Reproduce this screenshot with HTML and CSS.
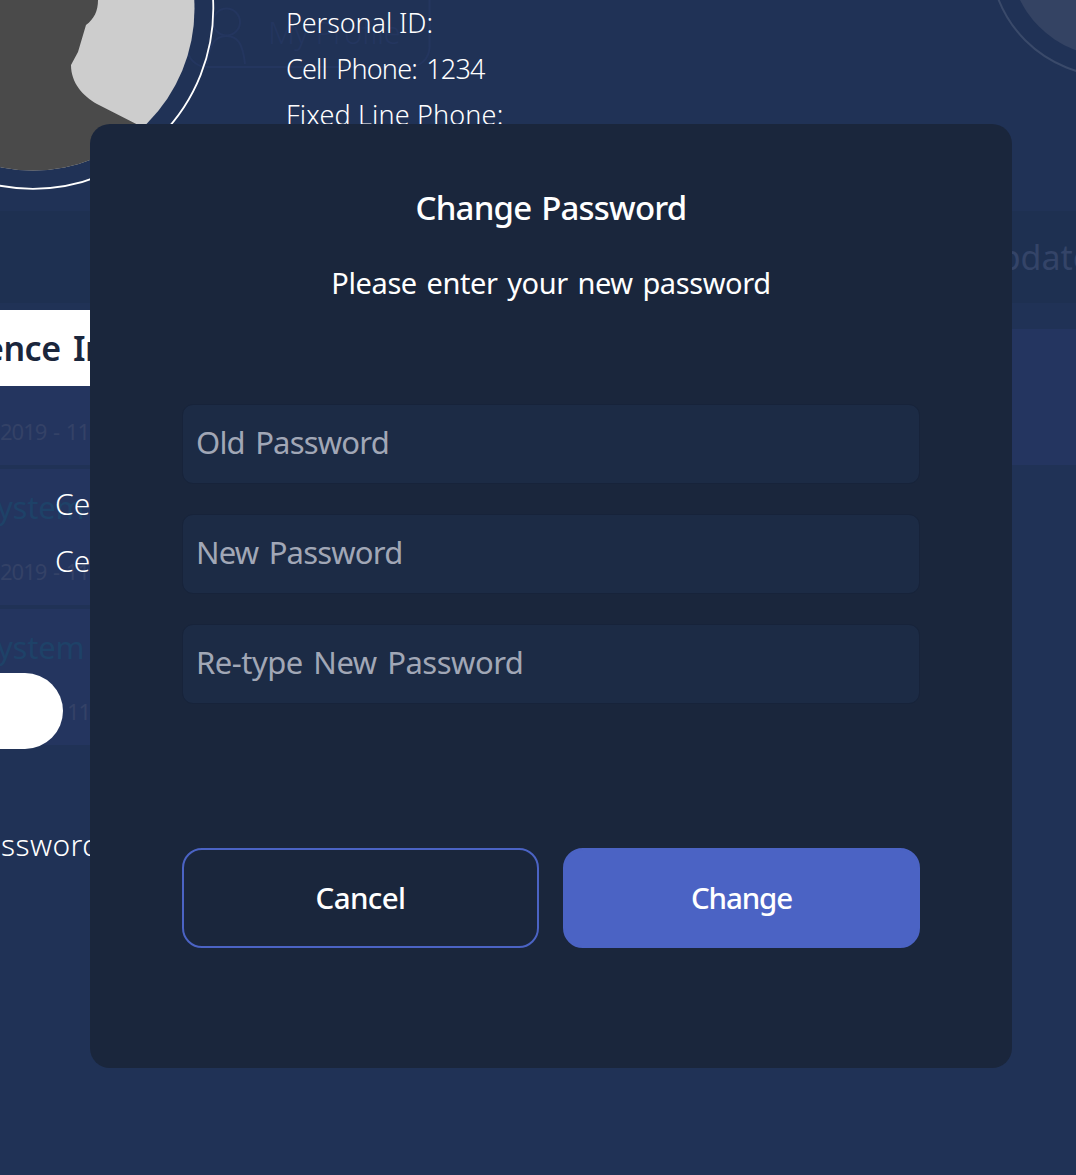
FILE: index.html
```html
<!DOCTYPE html>
<html lang="en">
<head>
<meta charset="utf-8">
<title>Change Password</title>
<link rel="stylesheet" href="styles.css">
</head>
<body>
<div class="screen">
  <!-- Dimmed dashboard -->
  <div class="dashboard">
    <header class="dash-header">
      <svg class="dash-art" width="1076" height="211" viewBox="0 0 1076 211" fill="none">
        <rect x="187" y="-24" width="242.500" height="91" rx="20" stroke="#24365f" stroke-width="2"/>
        <circle cx="226.500" cy="22" r="13.500" stroke="#24365f" stroke-width="2"/>
        <path d="M207 64C209 46 214 36 226.500 36S243 46 245 64" stroke="#24365f" stroke-width="2"/>
        <circle cx="1111" cy="-45" r="101.500" fill="#344363"/>
        <circle cx="1111" cy="-45" r="121" stroke="#3a4a6a" stroke-width="2"/>
      </svg>
      <span class="dash-profile">My Profile</span>
    </header>
    <div class="dash-band"><span class="dash-update">Update</span></div>
    <div class="dash-columns">
      <div class="dash-list">
        <div class="dash-row"><span class="dash-date">2019 - 11:30</span></div>
        <div class="dash-row"><span class="dash-name">ystem</span><span class="dash-date">2019 - 11:30</span></div>
        <div class="dash-row"><span class="dash-name">ystem</span><span class="dash-date dash-date-short">11:30</span></div>
      </div>
      <div class="dash-card"></div>
    </div>
  </div>

  <!-- Profile details -->
  <div class="profile">
    <div class="profile-top">
      <svg class="avatar" width="216" height="192" viewBox="0 0 216 192">
        <defs><clipPath id="face"><circle cx="33" cy="9" r="161.500"/></clipPath></defs>
        <g clip-path="url(#face)">
          <rect width="216" height="192" fill="#cdcdcd"/>
          <path d="M0 0H98C98 11 94 19 86 25L78 52L71 65C71 83 83 96 97 104L150 131V192H0Z" fill="#4a4a4a"/>
        </g>
        <circle cx="33" cy="8.500" r="180.300" fill="none" stroke="#fff" stroke-width="1.800"/>
      </svg>
      <div class="contact">
        <p class="contact-id">Personal ID:</p>
        <p class="contact-cell">Cell Phone: 1234</p>
        <p class="contact-line">Fixed Line Phone:</p>
      </div>
    </div>
    <div class="section-title"><span>ence Info</span></div>
    <div class="profile-items">
      <p>Cell</p>
      <p>Cell</p>
    </div>
    <div class="pill"></div>
    <p class="profile-password">ssword</p>
  </div>

  <form class="modal">
    <h1 class="modal-title">Change Password</h1>
    <p class="modal-text">Please enter your new password</p>
    <div class="fields">
      <input class="field" type="password" placeholder="Old Password">
      <input class="field" type="password" placeholder="New Password">
      <input class="field field-long" type="password" placeholder="Re-type New Password">
    </div>
    <div class="actions">
      <button class="button button-outline" type="button">Cancel</button>
      <button class="button button-solid" type="button">Change</button>
    </div>
  </form>
</div>
</body>
</html>
```
FILE: styles.css
```css
* { box-sizing: border-box; }

body {
  margin: 0;
  background: #203256;
  color: #fff;
  font-family: "Noto Sans", "Open Sans", sans-serif;
}

p, h1 { margin: 0; white-space: nowrap; }

.screen {
  position: relative;
  width: 1076px;
  height: 1175px;
  overflow: hidden;
}

.dashboard, .profile { position: absolute; inset: 0; }

.dash-header { height: 211px; overflow: hidden; padding: 8px 0 0 268px; position: relative; }
.dash-art { position: absolute; top: 0; left: 0; }
.dash-profile { color: #24365f; font-size: 31px; font-weight: 300; line-height: 48px; letter-spacing: -0.7px; position: relative; }

.dash-band {
  display: flex;
  height: 92px;
  align-items: center;
  justify-content: flex-end;
  background: #1e3051;
}
.dash-update { color: #344468; font-size: 34px; font-weight: 400; margin-right: -16px; }

.dash-columns { display: flex; align-items: flex-start; gap: 20px; margin-top: 26px; }
.dash-list { display: flex; flex-direction: column; gap: 4px; width: 500px; }
.dash-row {
  display: flex;
  flex-direction: column;
  justify-content: space-between;
  height: 136px;
  padding: 18px 0 19px;
  background: #24355f;
}
.dash-row:first-child { justify-content: flex-end; }
.dash-name { color: #1e4268; font-size: 31px; line-height: 40px; letter-spacing: -0.2px; margin-left: -3px; }
.dash-date { color: #344267; font-size: 22px; line-height: 30px; letter-spacing: -1px; word-spacing: 2px; }
.dash-date-short { margin-left: 67px; }
.dash-card { flex: 1; height: 136px; background: #243560; }

.profile { display: flex; flex-direction: column; align-items: flex-start; }
.profile-top { display: flex; gap: 70px; height: 310px; }
.avatar { flex: none; }
.contact { font-size: 27px; font-weight: 300; line-height: 46px; }
.contact-id { letter-spacing: -0.1px; }
.contact-cell { letter-spacing: -0.8px; word-spacing: 3px; }
.contact-line { letter-spacing: 0.15px; }

.section-title {
  display: flex;
  align-items: center;
  width: 500px;
  height: 76px;
  background: #fff;
  color: #1a263c;
  font-size: 34px;
  font-weight: 600;
  letter-spacing: -0.5px;
  word-spacing: 4px;
}
.section-title span { margin-left: -16px; }

.profile-items { padding: 89px 0 0 55px; font-size: 30px; font-weight: 300; line-height: 57px; }
.pill { width: 63px; height: 76px; margin-top: 84px; border-radius: 0 38px 38px 0; background: #fff; }
.profile-password { margin-top: 75px; padding-left: 1px; font-size: 30px; font-weight: 300; line-height: 42px; letter-spacing: 0.4px; }

.modal {
  position: absolute;
  top: 124px;
  left: 90px;
  width: 922px;
  height: 944px;
  padding: 60px 92px 120px;
  border-radius: 20px;
  background: #1a263c;
  text-align: center;
}
.modal-title { font-size: 33px; font-weight: 500; line-height: 48px; letter-spacing: -0.8px; word-spacing: 2px; }
.modal-text { margin-top: 30px; font-size: 29px; font-weight: 400; line-height: 42px; letter-spacing: -0.4px; word-spacing: 2.5px; }

.fields { display: flex; flex-direction: column; gap: 30px; margin-top: 100px; }
.field {
  width: 738px;
  height: 80px;
  padding: 0 13px 4px;
  border: 1px solid #17233a;
  border-radius: 11px;
  background: #1c2b45;
  color: #fff;
  font: 400 31px "Noto Sans", "Open Sans", sans-serif;
  letter-spacing: -0.8px;
  word-spacing: 3px;
}
.field::placeholder { color: #a1a7b6; opacity: 1; }
.field-long { letter-spacing: -0.5px; }

.actions { display: grid; grid-template-columns: 357px 357px; gap: 24px; margin-top: 144px; }
.button {
  height: 100px;
  padding: 0 0 2px;
  border: 2px solid #4b63c4;
  border-radius: 20px;
  color: #fff;
  font: 500 29.5px "Noto Sans", "Open Sans", sans-serif;
  letter-spacing: -0.6px;
}
.button-outline { background: transparent; }
.button-solid { background: #4b63c4; letter-spacing: -1.1px; }
```
